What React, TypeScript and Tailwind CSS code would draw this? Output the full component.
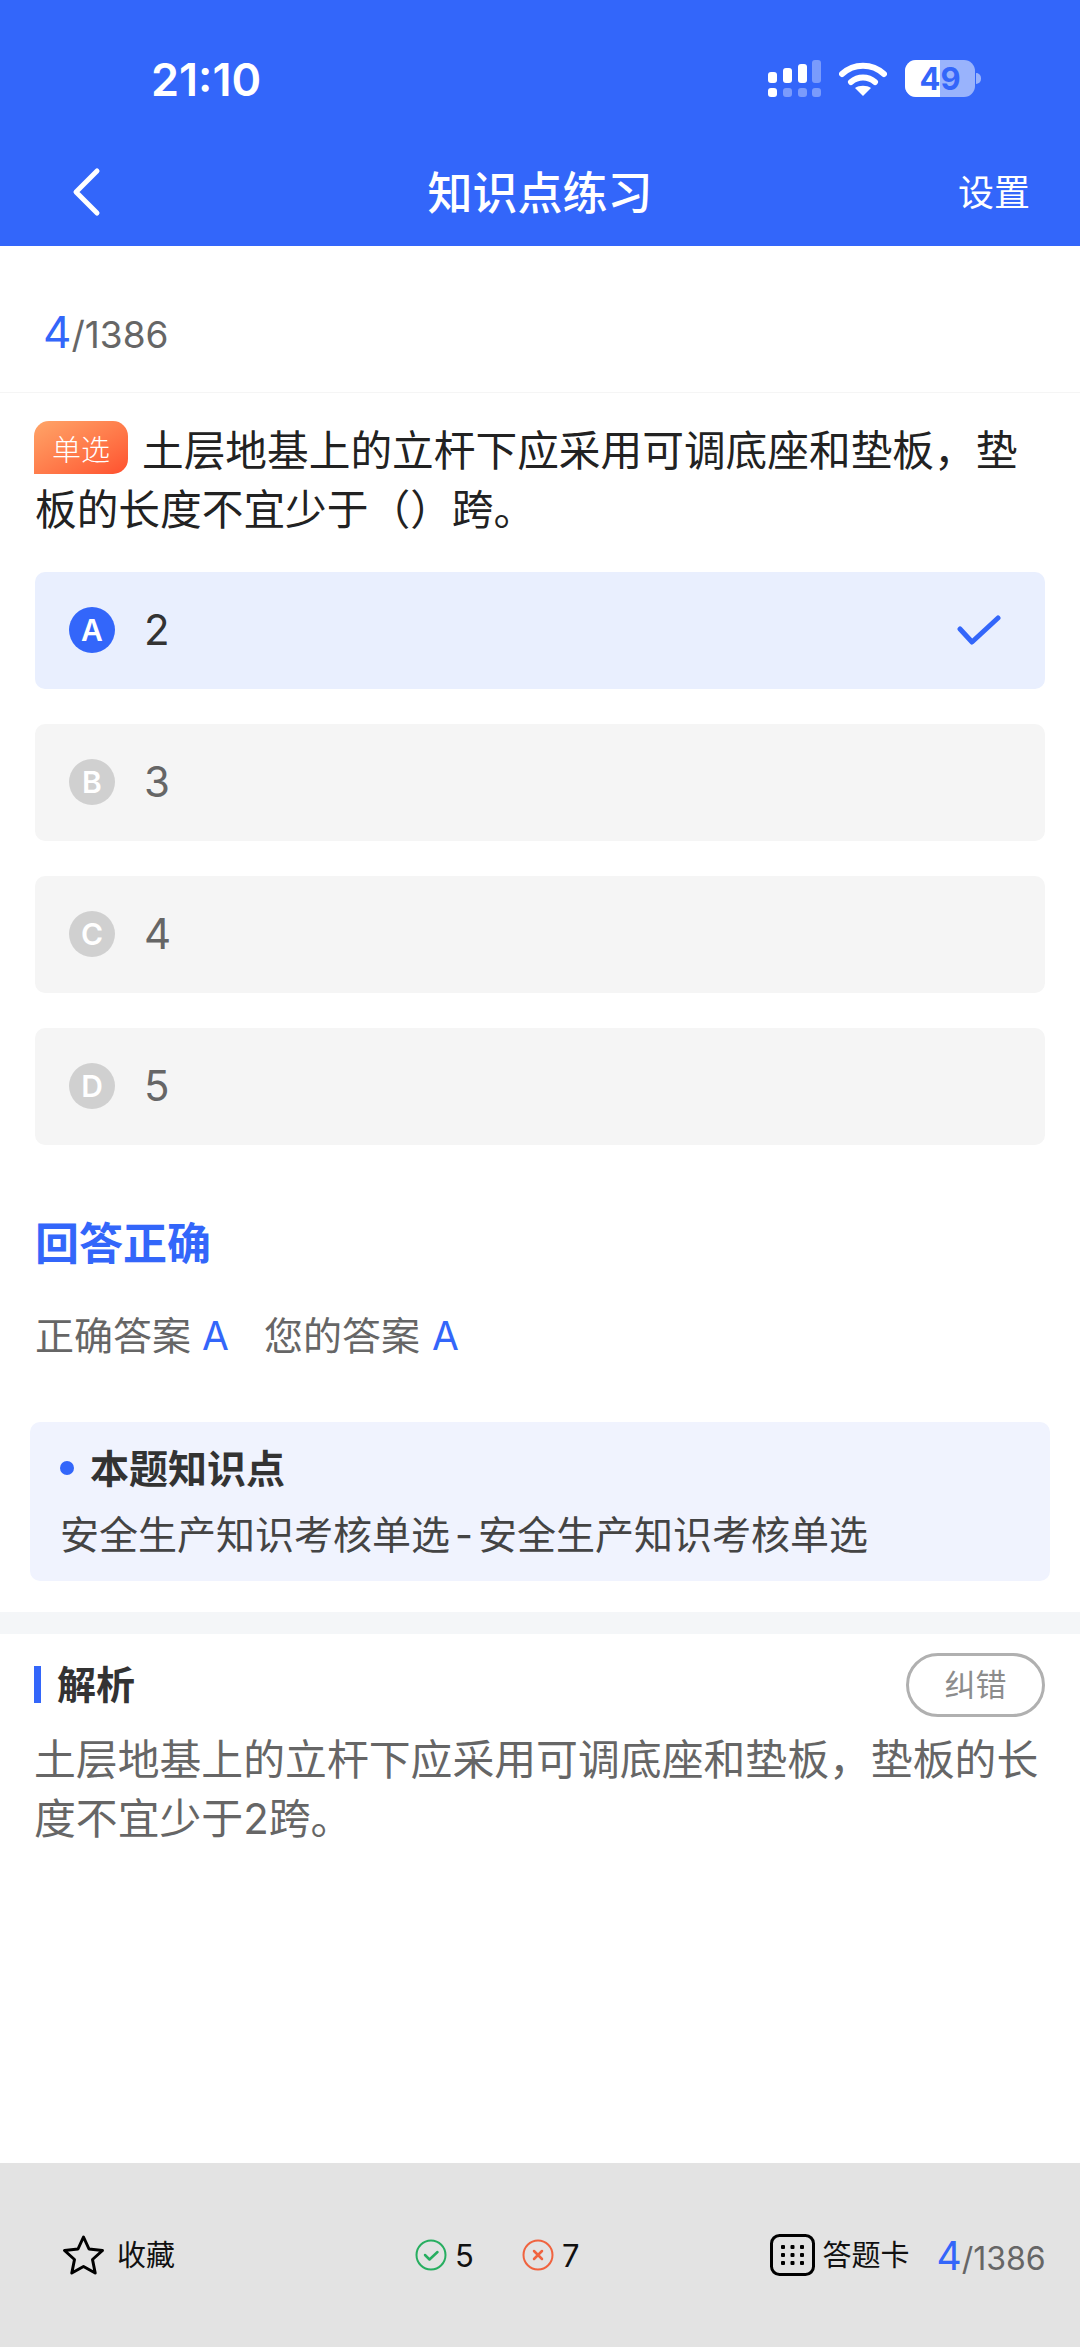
const F = '"Inter","Noto Sans CJK SC",sans-serif';

function Option({ l, t, active }: { l: string; t: string; active?: boolean }) {
  return (
    <div className={`h-[117px] rounded-[10px] flex items-center pl-[34px] pr-[44px] ${active ? "bg-[#e9effe]" : "bg-[#f5f5f5]"}`}>
      <div className={`w-[46px] h-[46px] rounded-full flex items-center justify-center text-white text-[30px] font-semibold ${active ? "bg-[#3366fa]" : "bg-[#d0d0d0]"}`}>{l}</div>
      <div className={`ml-[29px] text-[42px] leading-none ${active ? "text-[#333333]" : "text-[#666666]"}`}>{t}</div>
      {active && (
        <svg className="ml-auto" width="44" height="31" viewBox="0 0 44 31" fill="none">
          <path d="M3 14 L15 27 L41 3" stroke="#3366fa" strokeWidth="5" strokeLinecap="round" strokeLinejoin="round" />
        </svg>
      )}
    </div>
  );
}

export default function App() {
  return (
    <div className="w-[1080px] h-[2347px] bg-white flex flex-col overflow-hidden" style={{ fontFamily: F }}>
      <div className="h-[246px] shrink-0 bg-[#3366fa] flex flex-col text-white">
        <div className="h-[155px] flex items-start justify-between pl-[151px] pr-[99px] pt-[60px]">
          <div className="text-[45px] leading-[38px] font-semibold mt-[1px]">21:10</div>
          <div className="flex items-start gap-[18px]">
            <svg width="53" height="37" viewBox="0 0 53 37" fill="white">
              <rect x="0" y="12" width="9" height="11" rx="3" />
              <rect x="15" y="8" width="9" height="15" rx="3" />
              <rect x="30" y="4" width="9" height="19" rx="3" />
              <rect x="44" y="0" width="9" height="23" rx="3" opacity="0.35" />
              <rect x="0" y="28" width="9" height="9" rx="3" />
              <rect x="15" y="28" width="9" height="9" rx="3" opacity="0.35" />
              <rect x="30" y="28" width="9" height="9" rx="3" opacity="0.35" />
              <rect x="44" y="28" width="9" height="9" rx="3" opacity="0.35" />
            </svg>
            <svg className="mt-[2px]" width="48" height="34" viewBox="0 0 48 34" fill="none" stroke="white">
              <path d="M3 12 C15 1 33 1 45 12" strokeWidth="6" strokeLinecap="round" />
              <path d="M12 20 C19 14 29 14 36 20" strokeWidth="6" strokeLinecap="round" />
              <path d="M24 34 L16 26 C20 23 28 23 32 26 Z" fill="white" stroke="none" />
            </svg>
            <div className="flex items-center">
              <div className="relative w-[70px] h-[37px] rounded-[11px] overflow-hidden bg-[#99b3fc] flex">
                <div className="w-[35px] h-full bg-white" />
                <div className="absolute inset-0 flex items-center justify-center text-[#3366fa] text-[31px] font-bold leading-none">49</div>
              </div>
              <div className="w-[5px] h-[11px] rounded-r-full bg-[#99b3fc] ml-[1px]" />
            </div>
          </div>
        </div>
        <div className="relative flex-1 flex items-center justify-center pb-[14px]">
          <svg className="absolute left-[70px] top-[12px]" width="32" height="50" viewBox="0 0 32 50" fill="none">
            <path d="M27 4 L6 25 L27 46" stroke="white" strokeWidth="5" strokeLinecap="round" strokeLinejoin="round" />
          </svg>
          <div className="text-[45px] leading-none font-medium">知识点练习</div>
          <div className="absolute right-[50px] top-[20px] text-[36px] leading-none">设置</div>
        </div>
      </div>

      <div className="h-[147px] shrink-0 pl-[43px] pt-[64px] flex items-baseline border-b border-[#f5f5f5] text-[#666666]">
        <span className="text-[44px] text-[#3366fa] leading-none">4</span>
        <span className="text-[37px] leading-none">/1386</span>
      </div>

      <div className="px-[35px] pt-[28px] text-[41.7px] leading-[59px] text-[#222222]">
        <span className="inline-flex align-[5px] items-center justify-center w-[94px] h-[53px] pt-[5px] -ml-[1px] rounded-tl-[15px] rounded-tr-[15px] rounded-br-[15px] bg-linear-to-br from-[#ffa468] to-[#ff4f2e] text-white text-[29px] font-light leading-none mr-[14px]">单选</span>
        土层地基上的立杆下应采用可调底座和垫板，垫板的长度不宜少于（）跨。
      </div>

      <div className="px-[35px] mt-[32px] flex flex-col gap-[35px]">
        <Option l="A" t="2" active />
        <Option l="B" t="3" />
        <Option l="C" t="4" />
        <Option l="D" t="5" />
      </div>

      <div className="px-[35px] mt-[77px] text-[44px] leading-none font-bold text-[#3366fa]">回答正确</div>
      <div className="px-[35px] mt-[50px] text-[39px] leading-none text-[#666666] flex">
        <span>正确答案</span><span className="text-[#3366fa] ml-[11px]">A</span>
        <span className="ml-[35px]">您的答案</span><span className="text-[#3366fa] ml-[12px]">A</span>
      </div>

      <div className="mx-[30px] mt-[67px] h-[159px] shrink-0 rounded-[10px] bg-[#f0f3fe] pl-[30px] pt-[27px]">
        <div className="flex items-center text-[39px] leading-none font-bold text-[#333333]">
          <span className="w-[14px] h-[14px] rounded-full bg-[#3366fa] mr-[16px]" />本题知识点
        </div>
        <div className="mt-[27px] text-[39px] leading-none text-[#444444] whitespace-nowrap">安全生产知识考核单选<span className="mx-[5px]">-</span>安全生产知识考核单选</div>
      </div>

      <div className="mt-[31px] h-[22px] shrink-0 bg-[#f4f6f8]" />

      <div className="pl-[34px] pr-[35px] pt-[19px] flex-1">
        <div className="flex items-center justify-between h-[64px]">
          <div className="flex items-center text-[39px] leading-none font-bold text-[#333333]">
            <span className="w-[7px] h-[37px] bg-[#3366fa] mr-[16px]" />解析
          </div>
          <div className="w-[139px] h-[64px] rounded-full border-[3px] border-[#b0b0b0] flex items-center justify-center text-[31px] leading-none text-[#8c8c8c]">纠错</div>
        </div>
        <div className="mt-[13px] text-[41.85px] leading-[59px] text-[#666666]">土层地基上的立杆下应采用可调底座和垫板，垫板的长度不宜少于2跨。</div>
      </div>

      <div className="h-[184px] shrink-0 bg-[#e3e3e3] flex items-center pl-[62px] text-[#111111]">
        <div className="flex items-center">
          <svg width="43" height="42" viewBox="0 0 43 42" fill="none">
            <path d="M21.5 3 L27 15 L40.5 16.5 L30.5 25.5 L33.2 39 L21.5 32.5 L9.8 39 L12.5 25.5 L2.5 16.5 L16 15 Z" stroke="#000" strokeWidth="3" strokeLinejoin="round" />
          </svg>
          <span className="ml-[12px] text-[29px] leading-none">收藏</span>
        </div>
        <div className="ml-[240px] flex items-center">
          <svg width="32" height="32" viewBox="0 0 32 32" fill="none">
            <circle cx="16" cy="16" r="14.5" stroke="#27ae60" strokeWidth="2" />
            <path d="M10 16 L14.5 20.5 L22.5 13" stroke="#27ae60" strokeWidth="2.5" strokeLinecap="round" strokeLinejoin="round" />
          </svg>
          <span className="ml-[8px] text-[31px] leading-none">5</span>
        </div>
        <div className="ml-[48px] flex items-center">
          <svg width="32" height="32" viewBox="0 0 32 32" fill="none">
            <circle cx="16" cy="16" r="14.5" stroke="#f0633f" strokeWidth="2" />
            <path d="M12 12 L20 20 M20 12 L12 20" stroke="#f0633f" strokeWidth="2.5" strokeLinecap="round" />
          </svg>
          <span className="ml-[8px] text-[31px] leading-none">7</span>
        </div>
        <div className="ml-[191px] flex items-center">
          <svg width="45" height="42" viewBox="0 0 45 42" fill="none">
            <rect x="1.5" y="1.5" width="42" height="39" rx="8" stroke="#000" strokeWidth="3" />
            {[13, 22.5, 32].map((x) => [13, 21, 29].map((y) => <rect key={`${x}-${y}`} x={x - 2} y={y - 2} width="4" height="4" rx="1" fill="#000" />))}
          </svg>
          <span className="ml-[7px] text-[29px] leading-none">答题卡</span>
        </div>
        <div className="ml-[27px] flex items-baseline text-[#666666]">
          <span className="text-[39px] leading-none text-[#3366fa]">4</span>
          <span className="text-[32px] leading-none">/1386</span>
        </div>
      </div>
    </div>
  );
}
